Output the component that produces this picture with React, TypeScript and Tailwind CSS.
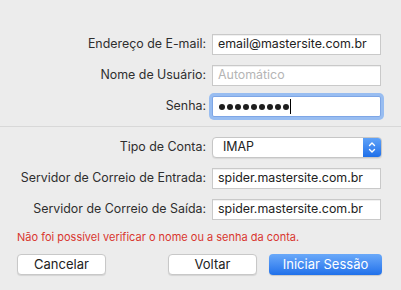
import React from 'react';

const Label: React.FC<{ children: React.ReactNode }> = ({ children }) => (
  <span className="w-[207px] shrink-0 pr-[1px] text-right text-[12.4px] text-[#2e2e2e]">{children}</span>
);

const Field: React.FC<{ value?: string; placeholder?: string }> = ({ value, placeholder }) => (
  <div className="ml-[5px] flex h-[21px] w-[169px] items-center border border-[#c9c9c9] bg-white px-[5px] text-[12.4px] shadow-[inset_0_1px_0_rgba(0,0,0,0.06)]">
    {value ? (
      <span className="text-[#222]">{value}</span>
    ) : (
      <span className="text-[#b5b5b5]">{placeholder}</span>
    )}
  </div>
);

const App: React.FC = () => {
  const dots = Array.from({ length: 9 });
  return (
    <div
      className="flex h-[290px] w-[401px] flex-col bg-[#ececec]"
      style={{ fontFamily: 'Inter, "Liberation Sans", sans-serif' }}
    >
      <div className="flex flex-col gap-[10px] pt-[34px]">
        <div className="flex items-center">
          <Label>Endereço de E-mail:</Label>
          <Field value="email@mastersite.com.br" />
        </div>
        <div className="flex items-center">
          <Label>Nome de Usuário:</Label>
          <Field placeholder="Automático" />
        </div>
        <div className="flex items-center">
          <Label>Senha:</Label>
          <div className="ml-[5px] flex h-[21px] w-[169px] items-center rounded-[2px] border border-[#7ea6e6] bg-white pl-[6px] ring-[3px] ring-[#98bdf1]">
            <div className="flex items-center gap-[2px]">
              {dots.map((_, i) => (
                <span key={i} className="h-[6px] w-[6px] rounded-full bg-[#1e1e1e]" />
              ))}
            </div>
            <span className="ml-[1px] h-[15px] w-[1px] bg-black" />
          </div>
        </div>
      </div>

      <div className="mt-[9px] h-px w-full bg-[#d8d8d8]" />

      <div className="flex flex-col gap-[10px] pt-[10px]">
        <div className="flex items-center">
          <Label>Tipo de Conta:</Label>
          <div className="ml-[5px] flex h-[21px] w-[170px] items-center overflow-hidden rounded-[4px] border border-[#c6c6c6] bg-white shadow-[0_1px_1px_rgba(0,0,0,0.08)]">
            <span className="flex-1 pl-[10px] text-[12.4px] text-[#222]">IMAP</span>
            <div className="flex h-full w-[18px] items-center justify-center bg-gradient-to-b from-[#5fa2f8] to-[#1d6fe9]">
              <svg width="8" height="13" viewBox="0 0 8 13" fill="none" stroke="white" strokeWidth="1.4" strokeLinecap="round" strokeLinejoin="round">
                <path d="M1.5 4.5 L4 2 L6.5 4.5" />
                <path d="M1.5 8.5 L4 11 L6.5 8.5" />
              </svg>
            </div>
          </div>
        </div>
        <div className="flex items-center">
          <Label>Servidor de Correio de Entrada:</Label>
          <Field value="spider.mastersite.com.br" />
        </div>
        <div className="flex items-center">
          <Label>Servidor de Correio de Saída:</Label>
          <Field value="spider.mastersite.com.br" />
        </div>
      </div>

      <p className="mt-[10px] pl-[17px] text-[11px] leading-[14px] text-[#d9362f]">
        Não foi possível verificar o nome ou a senha da conta.
      </p>

      <div className="mt-[10px] flex items-center pl-[17px]">
        <button className="flex h-[21px] w-[89px] items-center justify-center rounded-[4px] border border-[#c8c8c8] bg-white text-[13px] text-[#222] shadow-[0_1px_1px_rgba(0,0,0,0.1)]">
          Cancelar
        </button>
        <button className="ml-[62px] flex h-[21px] w-[89px] items-center justify-center rounded-[4px] border border-[#c8c8c8] bg-white text-[13px] text-[#222] shadow-[0_1px_1px_rgba(0,0,0,0.1)]">
          Voltar
        </button>
        <button className="ml-[12px] flex h-[21px] w-[113px] items-center justify-center rounded-[4px] bg-gradient-to-b from-[#6aa9f9] to-[#1f70ea] text-[13px] text-white shadow-[0_1px_1px_rgba(0,0,0,0.15)]">
          Iniciar Sessão
        </button>
      </div>
    </div>
  );
};

export default App;
